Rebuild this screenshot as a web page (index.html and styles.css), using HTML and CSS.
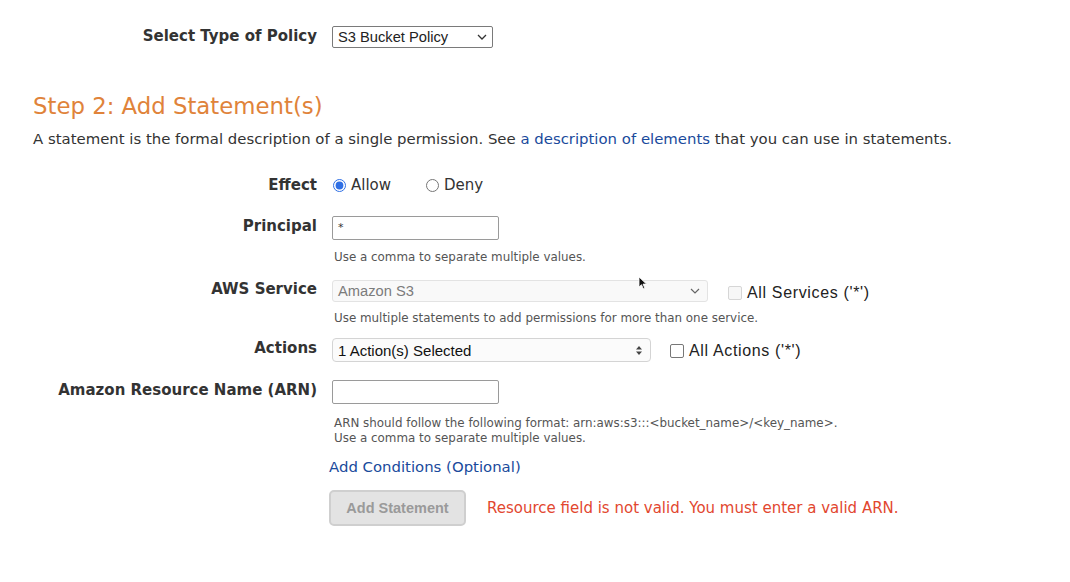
FILE: index.html
```html
<!DOCTYPE html>
<html>
<head>
<meta charset="utf-8">
<link rel="stylesheet" href="styles.css">
</head>
<body>
<div class="page">
  <div class="row row-policy">
    <label class="lbl">Select Type of Policy</label>
    <div class="ctl">
      <span class="sel sel-policy">
        <span class="sel-text">S3 Bucket Policy</span>
        <svg class="chev" width="10" height="6" viewBox="0 0 10 6"><path d="M1 1l4 4 4-4" fill="none" stroke="#333" stroke-width="1.3"/></svg>
      </span>
    </div>
  </div>

  <h2 class="step">Step 2: Add Statement(s)</h2>
  <p class="intro">A statement is the formal description of a single permission. See <a href="#" class="link">a description of elements</a> that you can use in statements.</p>

  <div class="row row-effect">
    <label class="lbl">Effect</label>
    <div class="ctl radios">
      <label class="radio"><input type="radio" name="eff" checked> Allow</label>
      <label class="radio deny"><input type="radio" name="eff"> Deny</label>
    </div>
  </div>

  <div class="row row-principal">
    <label class="lbl">Principal</label>
    <div class="ctl"><span class="txt">*</span></div>
  </div>
  <div class="hint hint-principal">Use a comma to separate multiple values.</div>

  <div class="row row-service">
    <label class="lbl">AWS Service</label>
    <div class="ctl">
      <span class="sel sel-service">
        <span class="sel-text">Amazon S3</span>
        <svg class="chev" width="10" height="6" viewBox="0 0 10 6"><path d="M1 1l4 4 4-4" fill="none" stroke="#666" stroke-width="1.2"/></svg>
      </span>
      <label class="chk chk-services"><span class="box disabled"></span>All Services ('*')</label>
    </div>
  </div>
  <div class="hint hint-service">Use multiple statements to add permissions for more than one service.</div>

  <div class="row row-actions">
    <label class="lbl">Actions</label>
    <div class="ctl">
      <span class="sel sel-actions">
        <span class="sel-text">1 Action(s) Selected</span>
        <svg class="updown" width="6" height="9" viewBox="0 0 6 9"><path d="M3 0L6 3.5H0z M3 9L0 5.5H6z" fill="#444"/></svg>
      </span>
      <label class="chk chk-actions"><span class="box"></span>All Actions ('*')</label>
    </div>
  </div>

  <div class="row row-arn">
    <label class="lbl">Amazon Resource Name (ARN)</label>
    <div class="ctl"><span class="txt"></span></div>
  </div>
  <div class="hint hint-arn">ARN should follow the following format: arn:aws:s3:::&lt;bucket_name&gt;/&lt;key_name&gt;.<br>Use a comma to separate multiple values.</div>

  <div class="cond"><a href="#" class="link">Add Conditions (Optional)</a></div>

  <div class="actions-row">
    <button class="btn" disabled>Add Statement</button>
    <span class="err">Resource field is not valid. You must enter a valid ARN.</span>
  </div>

  <svg class="cursor" width="10" height="14" viewBox="0 0 10 14"><path d="M1 1v10l2.5-2.3 1.8 4 1.5-.7-1.8-3.9H8.5z" fill="#111" stroke="#fff" stroke-width="0.8"/></svg>
</div>
</body>
</html>
```

FILE: styles.css
```css
html, body {
  margin: 0;
  padding: 0;
  background: #fff;
}
body {
  font-family: "DejaVu Sans", Verdana, sans-serif;
  color: #333;
}
.page {
  position: relative;
  padding: 26px 0 0 33px;
}
.row {
  display: grid;
  grid-template-columns: 284px 1fr;
  column-gap: 15px;
  align-items: center;
}
.lbl {
  position: relative;
  top: -2px;
  text-align: right;
  font-weight: bold;
  font-size: 15px;
  color: #333;
  white-space: nowrap;
}
.row-policy .lbl { top: -1px; }
.row-effect .lbl { top: 0; }
.ctl {
  display: flex;
  align-items: center;
}
.sel {
  position: relative;
  box-sizing: border-box;
  display: flex;
  align-items: center;
  font-family: "Liberation Sans", Arial, sans-serif;
  font-size: 14.7px;
  color: #222;
  background: #fff;
}
.sel-text { padding-left: 5px; }
.chev { position: absolute; right: 7px; top: 50%; margin-top: -3px; }
.sel-policy .chev { right: 5px; }
.updown { position: absolute; right: 8px; top: 50%; margin-top: -4.5px; }
.sel-policy {
  width: 161px;
  height: 22px;
  border: 1px solid #7a7a7a;
  border-radius: 2px;
}
.sel-service {
  width: 376px;
  height: 22px;
  border: 1px solid #e3e3e3;
  border-radius: 3px;
  background: #f9f9f9;
  color: #7c7c7c;
}
.sel-actions {
  width: 319px;
  height: 24px;
  border: 1px solid #d4d4d4;
  border-radius: 4px;
  background: #fbfbfb;
  color: #111;
  font-size: 15px;
}
.txt {
  box-sizing: border-box;
  width: 167px;
  height: 24px;
  border: 1px solid #9a9a9a;
  border-radius: 2px;
  font-size: 11px;
  padding: 4px 0 0 5px;
  color: #333;
}
.step {
  margin: 45px 0 0;
  font-weight: normal;
  font-size: 22.8px;
  line-height: 26px;
  color: #e0833a;
}
.intro {
  margin: 11px 0 0;
  font-size: 14.9px;
  line-height: 18px;
  color: #333;
}
.link {
  color: #1a4a9c;
  text-decoration: none;
}
.row-effect { margin-top: 28px; height: 18px; }
.radios { font-size: 15px; }
.radio { display: flex; align-items: center; color: #333; }
.radio input {
  margin: 0 5px 0 1px;
  width: 13px;
  height: 13px;
  accent-color: #2f6fe4;
}
.deny { margin-left: 34px; }
.row-principal { margin-top: 22px; }
.hint {
  margin-left: 301px;
  font-size: 11.9px;
  line-height: 15px;
  color: #555;
}
.hint-principal { margin-top: 10px; }
.row-service { margin-top: 15px; }
.hint-service { margin-top: 9px; }
.row-actions { margin-top: 12px; }
.row-arn { margin-top: 18px; }
.hint-arn { margin-top: 12px; }
.chk {
  position: relative;
  top: 1px;
  display: flex;
  align-items: center;
  font-family: "Liberation Sans", Arial, sans-serif;
  font-size: 16px;
  letter-spacing: 0.65px;
  color: #222;
}
.box {
  box-sizing: border-box;
  width: 14px;
  height: 14px;
  border: 1px solid #777;
  border-radius: 2px;
  background: #fff;
  margin-right: 5px;
}
.box.disabled {
  border-color: #d6d6d6;
  background: #f7f7f7;
}
.chk-services { margin-left: 20px; top: 2px; }
.chk-actions { margin-left: 19px; }
.cond {
  margin: 12px 0 0 296px;
  font-size: 14.9px;
  line-height: 18px;
}
.actions-row {
  margin: 14px 0 0 296px;
  display: flex;
  align-items: center;
}
.btn {
  width: 137px;
  height: 36px;
  border: 2px solid #cfcfcf;
  border-radius: 5px;
  background: #e3e3e3;
  color: #9a9a9a;
  font-family: "Liberation Sans", Arial, sans-serif;
  font-weight: bold;
  font-size: 14.5px;
  padding: 0;
}
.err {
  margin-left: 21px;
  font-size: 15px;
  color: #e2472f;
}
.cursor {
  position: absolute;
  left: 638px;
  top: 276px;
}
```
